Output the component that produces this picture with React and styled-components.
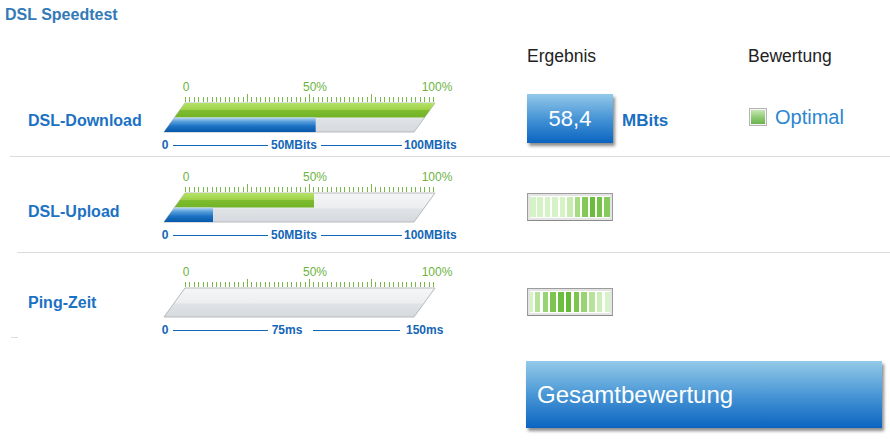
import React, { useId } from 'react';
import styled, { createGlobalStyle } from 'styled-components';

const GlobalStyle = createGlobalStyle`
  html, body {
    margin: 0;
    padding: 0;
    background: #fff;
  }
  body {
    font-family: "Liberation Sans", Arial, sans-serif;
  }
`;

const Page = styled.div`
  width: 890px;
  height: 440px;
  overflow: hidden;
`;

const Title = styled.h1`
  margin: 0;
  height: 40px;
  box-sizing: border-box;
  padding: 6px 0 0 5px;
  font-size: 16px;
  line-height: 18px;
  font-weight: bold;
  color: #337ab7;
`;

const HeadRow = styled.div`
  display: grid;
  grid-template-columns: 527px 221px 1fr;
  height: 29px;
  box-sizing: border-box;
  padding-top: 6px;
  font-size: 17.5px;
  line-height: 20px;
  color: #222;
`;

const Row = styled.div`
  display: grid;
  grid-template-columns: ${p => 160 - p.$inset}px 300px 67px 221px 1fr;
  margin-left: ${p => p.$inset}px;
  height: ${p => p.$height}px;
  box-sizing: border-box;
  border-bottom: ${p => (p.$last ? 'none' : '1px solid #dcdcdc')};
`;

const RowLabel = styled.div`
  padding: ${p => p.$top}px 0 0 ${p => 28 - p.$inset}px;
  font-size: 16px;
  line-height: 20px;
  font-weight: bold;
  color: #1b72c4;
`;

const Cell = styled.div`
  display: flex;
  align-items: flex-start;
  padding-top: ${p => p.$top}px;
`;

const ResultBox = styled.div`
  width: 86px;
  height: 49px;
  display: flex;
  align-items: center;
  justify-content: center;
  background: linear-gradient(#92c9ea, #3f8fd4 55%, #0b64c0);
  box-shadow: 2px 3px 3px rgba(0, 0, 0, 0.45);
  color: #fff;
  font-size: 22px;
`;

const Unit = styled.span`
  margin: 16px 0 0 9px;
  font-size: 17px;
  line-height: 22px;
  font-weight: bold;
  color: #1b6fc0;
`;

const Meter = styled.div`
  width: 86px;
  height: 28px;
  box-sizing: border-box;
  display: flex;
  align-items: center;
  justify-content: space-between;
  padding: 0 2px;
  border: 1px solid #9c9c9c;
  border-bottom-color: #8a8a8a;
  box-shadow: inset 0 0 0 2px #e4e4e4;
  background: #fff;
`;

const MeterBar = styled.span`
  width: ${p => p.$w}px;
  height: 20px;
  background: ${p => p.$color};
`;

const Rating = styled.div`
  align-self: start;
  display: flex;
  align-items: center;
  gap: 8px;
  padding: ${p => p.$top}px 0 0 1px;
  font-size: 20px;
  line-height: 22px;
  color: #2a86d0;
`;

const Check = styled.span`
  width: 18px;
  height: 18px;
  box-sizing: border-box;
  border: 1px solid #b4b4b4;
  box-shadow: inset 0 0 0 1px #f4f4f4;
  background: linear-gradient(#cfeabd, #8cc870 55%, #64b048);
`;

const Dash = styled.div`
  width: 7px;
  height: 1px;
  margin-left: 11px;
  background: #dcdcdc;
`;

const TotalButton = styled.div`
  margin: 23px 0 0 526px;
  width: 356px;
  height: 67px;
  box-sizing: border-box;
  padding-left: 11px;
  display: flex;
  align-items: center;
  background: linear-gradient(#93cae8, #4a97d6 50%, #0a64c0);
  box-shadow: 2px 3px 3px rgba(0, 0, 0, 0.45);
  color: #fff;
  font-size: 24px;
`;

const Svg = styled.svg`
  display: block;
  margin-top: ${p => p.$top}px;
  font-family: "Liberation Sans", Arial, sans-serif;
`;

// gauge with slanted track, green = rating, blue = measured value
function Gauge({ green, blue, mid, max, top, axis }) {
  const id = useId().replace(/:/g, '');
  const ticks = [];
  for (let i = 0; i <= 56; i++) {
    const x = Math.round(25 + (i * 248) / 56) + 0.5;
    const major = i % 14 === 0 && i > 0 && i < 56;
    ticks.push(<line key={i} x1={x} x2={x} y1={major ? 25 : 28} y2={33} />);
  }
  const shape = '25,34 275,34 254,63 4,63';
  const greenEnd = 25 + green * 250;
  const blueEnd = 5 + blue * 258;

  return (
    <Svg $top={top} width="300" height="82" viewBox="0 0 300 82">
      <defs>
        <linearGradient id={`tr${id}`} x1="0" y1="0" x2="0" y2="1">
          <stop offset="0" stopColor="#f5f6f8" />
          <stop offset="0.5" stopColor="#eceef0" />
          <stop offset="0.56" stopColor="#e0e3e6" />
          <stop offset="1" stopColor="#d6d9dd" />
        </linearGradient>
        <linearGradient id={`gr${id}`} x1="0" y1="0" x2="0" y2="1">
          <stop offset="0" stopColor="#b4e268" />
          <stop offset="0.45" stopColor="#9fd24a" />
          <stop offset="0.5" stopColor="#7dbd2e" />
          <stop offset="1" stopColor="#72b226" />
        </linearGradient>
        <linearGradient id={`bl${id}`} x1="0" y1="0" x2="0" y2="1">
          <stop offset="0" stopColor="#bcdaf2" />
          <stop offset="0.25" stopColor="#5ea3de" />
          <stop offset="0.6" stopColor="#1c72c4" />
          <stop offset="1" stopColor="#0758aa" />
        </linearGradient>
        <clipPath id={`cp${id}`}>
          <polygon points={shape} />
        </clipPath>
      </defs>

      <g fill="#6db33f" fontSize="12" textAnchor="middle">
        <text x="26" y="22">0</text>
        <text x="155" y="22">50%</text>
        <text x="277" y="22">100%</text>
      </g>
      <g stroke="#7ab648" strokeWidth="1" shapeRendering="crispEdges">{ticks}</g>

      <polygon points={shape} fill={`url(#tr${id})`} stroke="#b6babe" strokeWidth="1" />
      <g clipPath={`url(#cp${id})`}>
        {green > 0 && <rect x="0" y="34" width={greenEnd} height="14.5" fill={`url(#gr${id})`} />}
        {blue > 0 && <rect x="0" y="48.5" width={blueEnd} height="14.5" fill={`url(#bl${id})`} />}
      </g>

      <g fill="#1366b8" fontSize="12" fontWeight="bold">
        <text x="5" y="80" textAnchor="middle">0</text>
        <text x={axis.midX} y="80" textAnchor="middle">{mid}</text>
        <text x={axis.endX} y="80">{max}</text>
      </g>
      <g stroke="#1366b8" strokeWidth="1" shapeRendering="crispEdges">
        <line x1="13" x2={axis.l1} y1="76.5" y2="76.5" />
        <line x1={axis.l2} x2={axis.l3} y1="76.5" y2="76.5" />
      </g>
    </Svg>
  );
}

const meterDown = ['#d5f3c5', '#d5f3c5', '#d5f3c5', '#d5f3c5', '#d5f3c5', '#c8edb2', '#a5dc84', '#82c957', '#6abd3a', '#74c246', '#86cb5a'];
const meterPing = ['#d5f3c5', '#b6e29c', '#98d474', '#7cc650', '#6cbf3c', '#66bb36', '#7cc650', '#98d474', '#b6e29c', '#cdeeb9', '#d8f3c8'];

function SignalMeter({ colors, narrowFirst }) {
  return (
    <Meter>
      {colors.map((c, i) => (
        <MeterBar key={i} $color={c} $w={i === 0 && narrowFirst ? 2.5 : 5.5} />
      ))}
    </Meter>
  );
}

const mbitAxis = { midX: 134, endX: 244, l1: 108, l2: 161, l3: 242 };
const msAxis = { midX: 127, endX: 246, l1: 108, l2: 153, l3: 240 };

export default function App() {
  return (
    <Page>
      <GlobalStyle />
      <Title>DSL Speedtest</Title>
      <HeadRow>
        <span />
        <span>Ergebnis</span>
        <span>Bewertung</span>
      </HeadRow>

      <Row $inset={10} $height={88}>
        <RowLabel $inset={10} $top={42}>DSL-Download</RowLabel>
        <Gauge green={1.05} blue={0.584} mid="50MBits" max="100MBits" top={0} axis={mbitAxis} />
        <span />
        <Cell $top={25}>
          <ResultBox>58,4</ResultBox>
          <Unit>MBits</Unit>
        </Cell>
        <Rating $top={37}>
          <Check />
          Optimal
        </Rating>
      </Row>

      <Row $inset={17} $height={96}>
        <RowLabel $inset={17} $top={45}>DSL-Upload</RowLabel>
        <Gauge green={0.516} blue={0.186} mid="50MBits" max="100MBits" top={2} axis={mbitAxis} />
        <span />
        <Cell $top={36}>
          <SignalMeter colors={meterDown} />
        </Cell>
        <span />
      </Row>

      <Row $inset={17} $height={84} $last>
        <RowLabel $inset={17} $top={40}>Ping-Zeit</RowLabel>
        <Gauge green={0} blue={0} mid="75ms" max="150ms" top={1} axis={msAxis} />
        <span />
        <Cell $top={35}>
          <SignalMeter colors={meterPing} narrowFirst />
        </Cell>
        <span />
      </Row>
      <Dash />

      <TotalButton>Gesamtbewertung</TotalButton>
    </Page>
  );
}
